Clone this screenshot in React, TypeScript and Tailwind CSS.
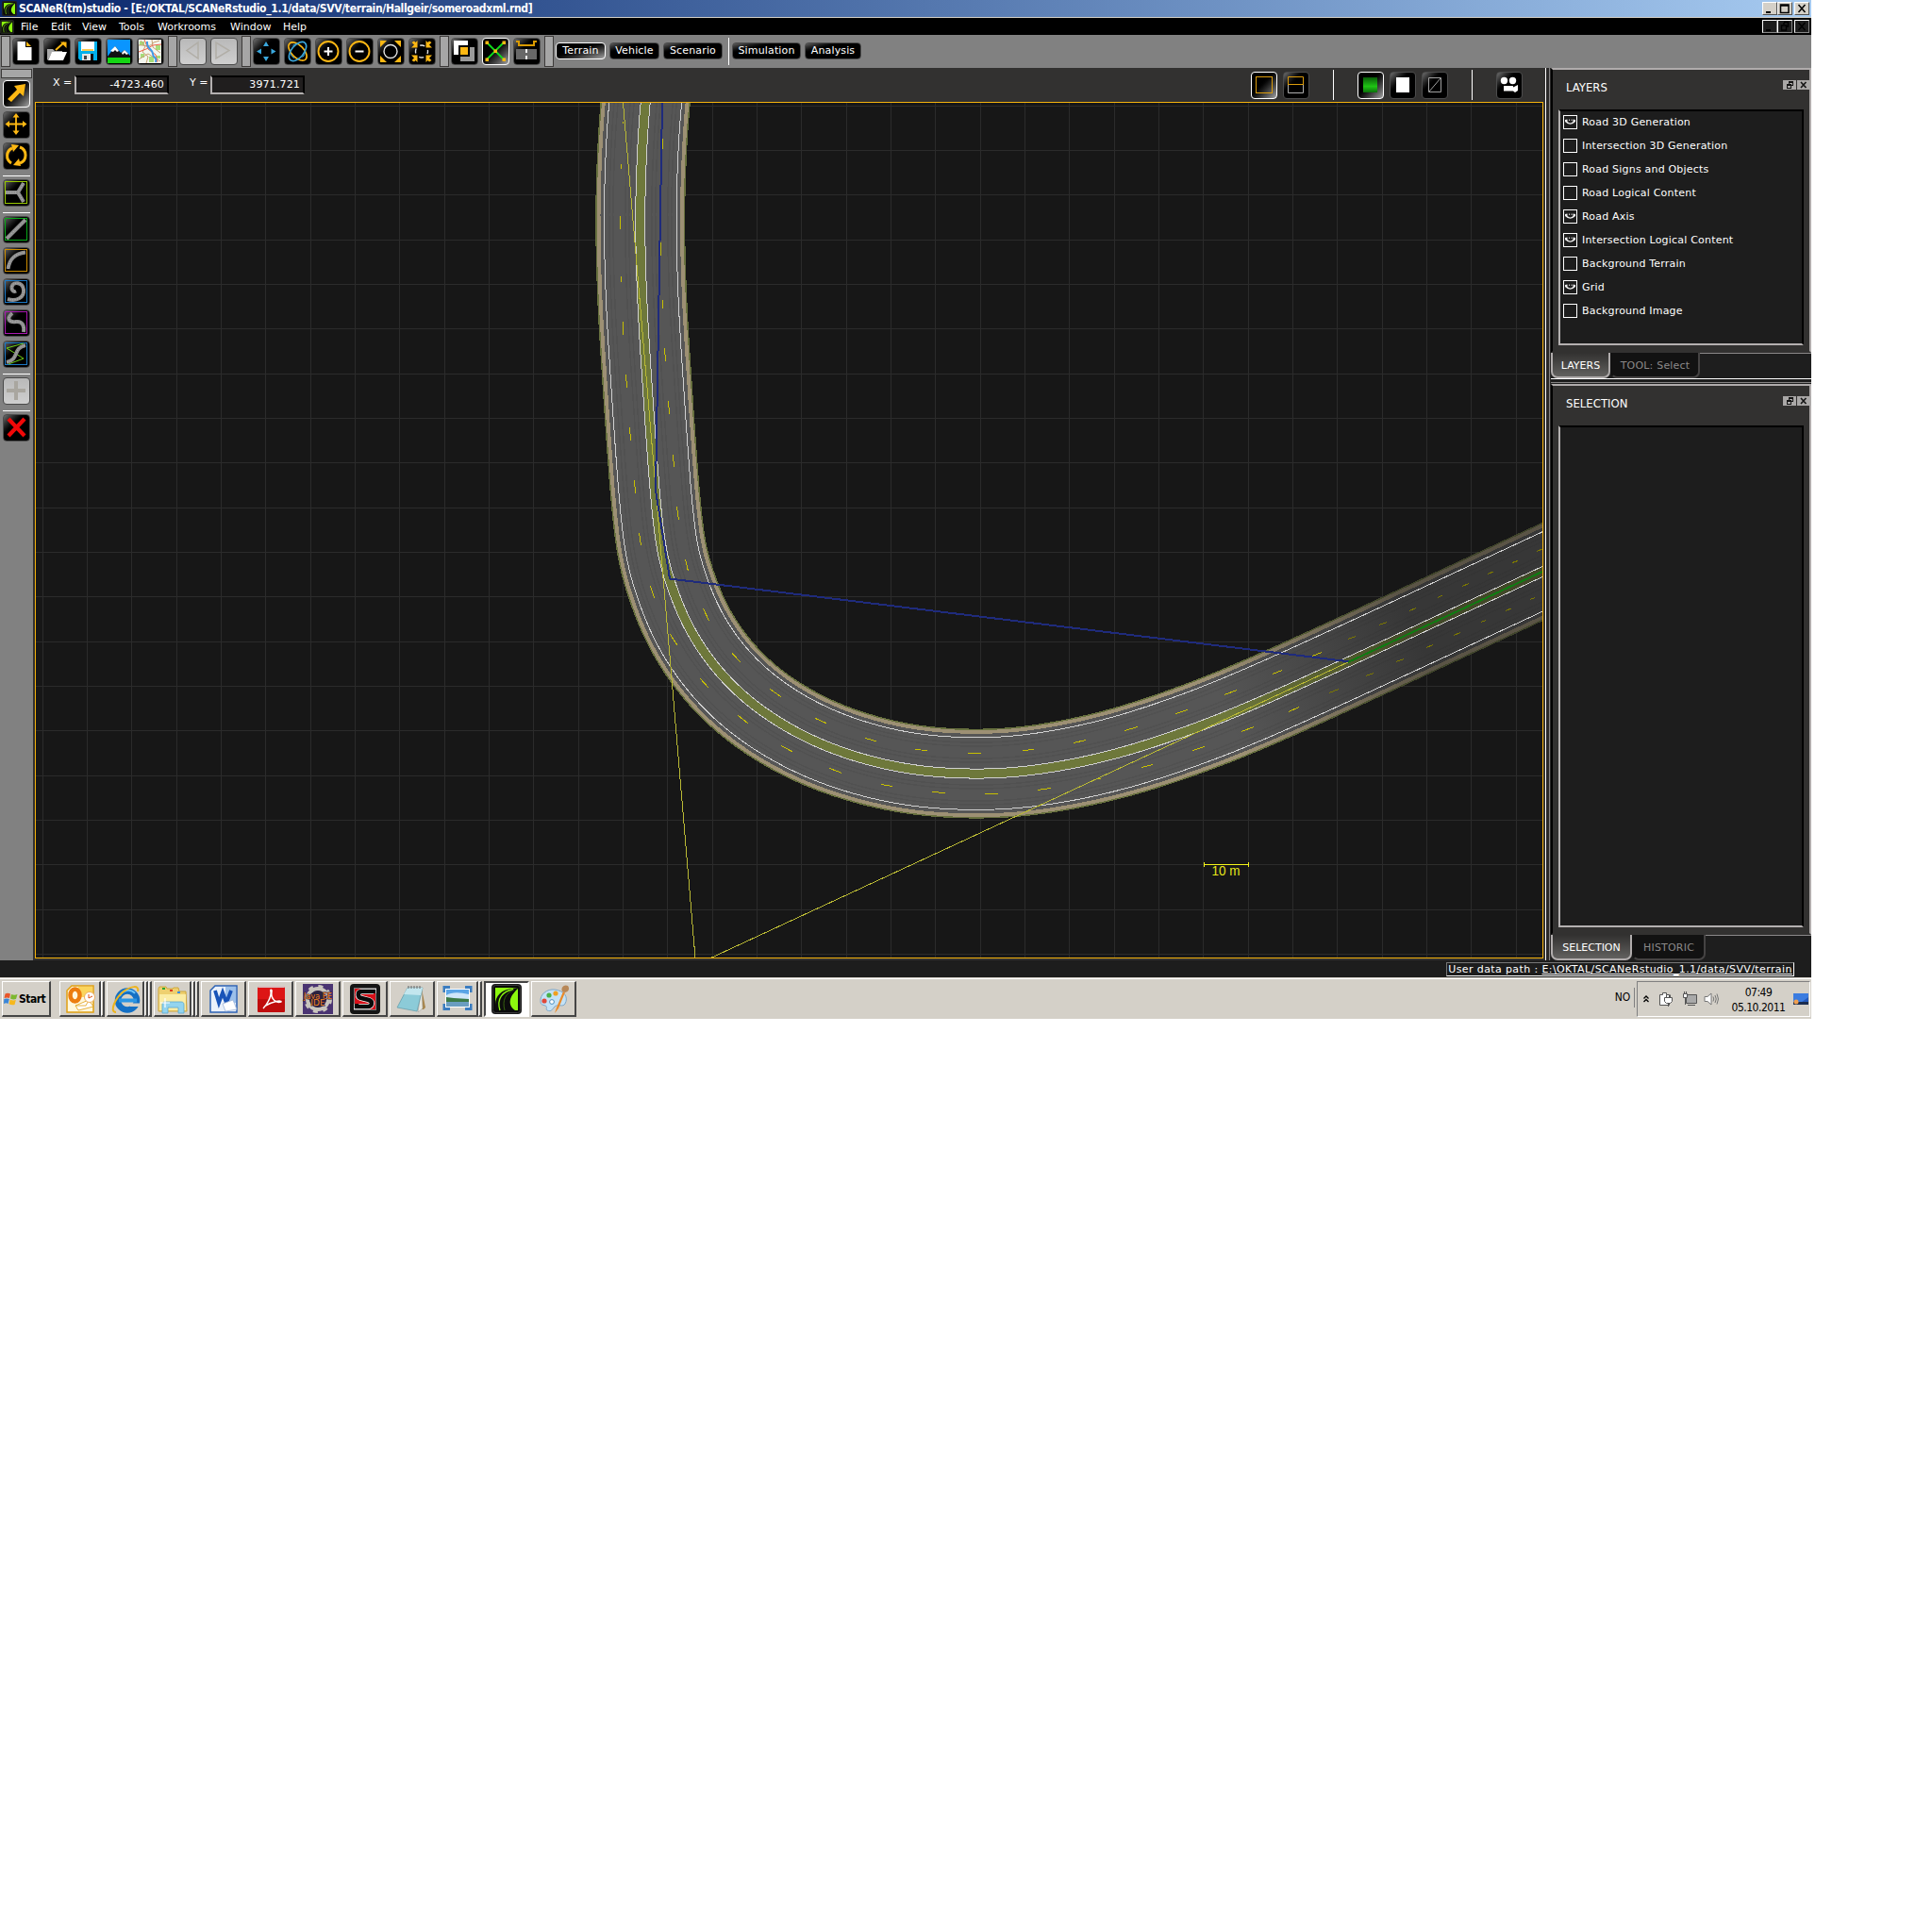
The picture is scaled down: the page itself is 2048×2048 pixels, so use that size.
import React from "react";

type Pt = [number, number];

const UI = "font-['DejaVu_Sans',sans-serif]";
const NARROW = "font-['DejaVu_Sans_Condensed','DejaVu_Sans',sans-serif] [font-stretch:condensed]";

/* ---------- road geometry ---------- */

const ROAD_POINTS: Pt[] = [
  [689, 65], [684, 109], [680.7, 157], [678.8, 214], [679, 264], [681.3, 330], [686, 406], [691.3, 483],
  [695.9, 540], [702, 588], [710, 616], [727, 660], [753.3, 701.7], [785.5, 736.3], [821, 763], [859, 784],
  [894, 798], [934, 809.6], [980, 817.5], [1030, 820.3], [1077, 818.6], [1127, 811.6], [1165, 803.5],
  [1207, 792.2], [1273, 769.5], [1340, 742], [1430, 701.3], [1532, 654], [1635, 606], [1700, 576],
];

function buildCenterline(): Pt[] {
  const dense: Pt[] = [];
  const P = ROAD_POINTS;
  for (let i = 0; i < P.length - 1; i++) {
    const p0 = P[Math.max(0, i - 1)], p1 = P[i], p2 = P[i + 1], p3 = P[Math.min(P.length - 1, i + 2)];
    const steps = Math.max(2, Math.round(Math.hypot(p2[0] - p1[0], p2[1] - p1[1]) / 4));
    for (let s = 0; s < steps; s++) {
      const t = s / steps;
      const f = (a: number, b: number, c: number, d: number) =>
        0.5 * (2 * b + (c - a) * t + (2 * a - 5 * b + 4 * c - d) * t * t + (3 * b - a - 3 * c + d) * t * t * t);
      dense.push([f(p0[0], p1[0], p2[0], p3[0]), f(p0[1], p1[1], p2[1], p3[1])]);
    }
  }
  let cur = dense;
  for (let pass = 0; pass < 3; pass++) {
    cur = cur.map((p, i) => {
      const k = Math.min(4, i, cur.length - 1 - i);
      let sx = 0, sy = 0;
      for (let j = i - k; j <= i + k; j++) { sx += cur[j][0]; sy += cur[j][1]; }
      return [sx / (2 * k + 1), sy / (2 * k + 1)] as Pt;
    });
  }
  return cur;
}

const CENTER = buildCenterline();

function offsetPath(d: number): string {
  return CENTER.map((p, i) => {
    const a = CENTER[Math.max(0, i - 1)], b = CENTER[Math.min(CENTER.length - 1, i + 1)];
    const dx = b[0] - a[0], dy = b[1] - a[1], l = Math.hypot(dx, dy) || 1;
    return `${i ? "L" : "M"}${(p[0] - (dy / l) * d).toFixed(2)} ${(p[1] + (dx / l) * d).toFixed(2)}`;
  }).join("");
}

const DASHES: number[][] = [
  [660.5, 129, 660.5, 131], [658.5, 173.5, 658.5, 178.5], [657.5, 229, 657.5, 243], [658.5, 293, 658.5, 299],
  [660.5, 341, 660.5, 354.5], [663.5, 397, 664.5, 411], [667.5, 453, 668.5, 467], [672.5, 509, 673.5, 523],
  [677.5, 565, 679.5, 578.5], [689.5, 621, 693.5, 634], [710.5, 672.5, 717.7, 683.6],
  [702.5, 147, 702.5, 158], [700.5, 257, 700.5, 271], [702.5, 318, 702.5, 327], [704.5, 369, 705.5, 383],
  [708.5, 425, 709.5, 439], [713.5, 482, 714.5, 495], [717.5, 537, 719.5, 551], [726.5, 593, 729.5, 605.5],
  [745.5, 645, 751.5, 658], [776, 692.3, 784.7, 701.7], [816.3, 730.3, 827.7, 738.7], [864, 761.3, 876, 766.7],
  [917, 782.3, 928.7, 785.7], [970, 794.5, 982.7, 795.5], [1026, 798.5, 1040, 798.5], [1084, 795.5, 1096, 794.5],
  [1138, 787.5, 1151, 784.5], [742.3, 719.3, 750.7, 728.7], [782.3, 758.3, 792.7, 766.7], [828, 790.3, 839.7, 796.7],
  [879, 814.3, 892, 819.3], [934, 831.5, 946, 833.5], [988, 839.5, 1002, 840.5], [1044, 841.5, 1058, 841.5],
  [1100, 837.5, 1114, 835.5], [1192, 774.5, 1206, 770.5], [1246, 756.5, 1259, 752.5], [1298, 736.5, 1311, 731.5],
  [1349, 714.5, 1359, 710.5], [1391, 695.5, 1401, 691.5], [1160, 826.5, 1167, 825], [1210, 813.5, 1222, 810.5],
  [1264, 795.5, 1277, 791.5], [1316, 775.5, 1329, 770.5], [1366, 754.5, 1377, 749.5],
];

const FADED_DASHES: number[][] = [
  [1429, 677.5, 1437, 674.5], [1462, 662.5, 1470, 659.5], [1494, 647.5, 1501, 644.5], [1524, 633.5, 1529, 631],
  [1550, 621.5, 1557, 618.5], [1577, 608.5, 1583, 606], [1603, 596.5, 1609, 594.5], [1629, 584.5, 1635, 582],
  [1409, 734.5, 1419, 730.5], [1448, 716.5, 1456, 713.5], [1480, 701.5, 1488, 698.5], [1512, 686.5, 1519, 683.5],
  [1541, 673.5, 1548, 670.5], [1570, 659.5, 1575, 657.5], [1596, 647.5, 1602, 645], [1622, 635.5, 1627, 633.5],
];

const toPath = (segs: number[][]) => segs.map((d) => `M${d[0]} ${d[1]}L${d[2]} ${d[3]}`).join("");

function Viewport() {
  const grid: string[] = [];
  for (let i = 0; i < 34; i++) grid.push(`M${Math.floor(45.2 + 47.33 * i) + 0.5} 109V1015`);
  for (let i = 0; i < 20; i++) grid.push(`M38 ${Math.floor(112.2 + 47.33 * i) + 0.5}H1635`);
  const c = offsetPath(0);
  return (
    <svg viewBox="38 109 1597 906" width="1597" height="906" className="block" shapeRendering="crispEdges" fill="none">
      <defs>
        <linearGradient id="fade" gradientUnits="userSpaceOnUse" x1="1300" y1="760" x2="1500" y2="668">
          <stop offset="0" stopColor="#181818" stopOpacity="0" />
          <stop offset="1" stopColor="#181818" stopOpacity="0.5" />
        </linearGradient>
      </defs>
      <path d={grid.join("")} stroke="#2b2b2b" />
      <path d={c} stroke="#68713f" strokeWidth="95" />
      <path d={c} stroke="#9d9074" strokeWidth="92" />
      <path d={c} stroke="#565656" strokeWidth="84.5" />
      {[-33, -29, -16, -12, 12, 16, 29, 33].map((d) => (
        <path key={d} d={offsetPath(d)} stroke="#4f4f4f" strokeWidth="1.5" opacity="0.6" />
      ))}
      <path d={c} stroke="#6e783b" strokeWidth="10" />
      <path d={c} stroke="url(#fade)" strokeWidth="95" />
      {[-38.3, -5, 5, 38.3].map((d) => (
        <path key={d} d={offsetPath(d)} stroke="#d0d0d0" />
      ))}
      <path d={toPath(DASHES)} stroke="#c8c000" />
      <path d={toPath(FADED_DASHES)} stroke="#7c7800" />
      <path d="M660.5 109L737 1015M754.5 1015L1430 701.5" stroke="#b9b934" />
      <path d="M702 109L695 520L710 613.5L1430 701.3" stroke="#1f2b7c" strokeWidth="2" />
      <path d="M1429 702L1636 605.5" stroke="#117a12" strokeWidth="2" />
      <path d="M1276.5 914V919M1323.5 914V919M1276 916.5H1324" stroke="#f5f51a" />
      <text x="1284.5" y="927.5" fontSize="15" textLength="30" lengthAdjust="spacingAndGlyphs" fill="#e8e81a" className="font-['Liberation_Sans',sans-serif]">10 m</text>
    </svg>
  );
}

/* ---------- toolbar pieces ---------- */

function Btn({ children, active, disabled, small }: { children?: React.ReactNode; active?: boolean; disabled?: boolean; small?: boolean }) {
  const look = disabled
    ? "border-[#4a4a4a] bg-gradient-to-b from-[#b9b9b9] to-[#cfcfcf]"
    : active
    ? "border-white bg-gradient-to-br from-black from-35% to-[#a5a5a5]"
    : "border-[#4c4c4c] bg-gradient-to-br from-[#707070] to-black to-45%";
  return (
    <div className={`${small ? "w-7" : "w-[29px]"} h-[29px] shrink-0 rounded-[4px] border ${look}`}>
      <svg viewBox="1 1 27 27" width="27" height="27" className="block overflow-visible" fill="none">
        {children}
      </svg>
    </div>
  );
}

const Handle = () => <div className="h-[33px] w-[10px] shrink-0 border border-[#3c3a39] bg-[#a6a6a6]" />;

function Pill({ label, w, active }: { label: string; w: string; active?: boolean }) {
  return (
    <div
      className={`${w} ${UI} flex h-[18px] shrink-0 items-center justify-center rounded-[4px] border text-[11px] tracking-[0.15px] whitespace-nowrap text-white ${
        active
          ? "border-white bg-gradient-to-br from-black from-35% to-[#a5a5a5]"
          : "border-[#4c4c4c] bg-gradient-to-br from-[#606060] to-black to-35%"
      }`}
    >
      {label}
    </div>
  );
}

function Leaf({ size }: { size: number }) {
  return (
    <svg viewBox="0 0 32 32" width={size} height={size} className="shrink-0" fill="none">
      <rect width="32" height="32" rx="4" fill="#1a1a1a" />
      <rect x="1.500" y="1.500" width="29" height="29" rx="3" fill="#0a0a0a" stroke="#3a3a3a" />
      <rect x="4" y="4" width="24" height="24" fill="#8cf80e" />
      <path d="M28 4L20 5C11 7 4 12 4 22V28H25C18 23 17 15 28 5Z" fill="#0c0c0c" />
      <path d="M4 4H20C11 6 6 9 4 14Z" fill="#8cf80e" />
      <path d="M23 5.500C12 8 5 15 9 28" stroke="#8cf80e" strokeWidth="1.300" />
      <path d="M24 6C15 10 11 17 14 28" stroke="#3c6a10" strokeWidth="0.900" />
    </svg>
  );
}

function MainToolbar() {
  const A = "#fdb813";
  const B = "#3aa7dd";
  return (
    <div className="flex h-[35px] items-start bg-[#818181] pt-[1px] pl-[1px]">
      <Handle />
      <div className="mt-[2px] ml-[2px] flex gap-1">
        <Btn>
          <path d="M5.500 4H14V10H20.500V24H5.500Z" fill="#fff" />
          <path d="M15 4L20 9H15Z" fill={A} />
        </Btn>
        <Btn>
          <path d="M4 12H10L12 14H20V16H9L5 23.500H4Z" fill="#aaa" />
          <path d="M9 15H25L21 24H5Z" fill="#fff" />
          <path d="M13 13L22 5" stroke={A} strokeWidth="2" />
          <path d="M18 4.500H24.500V11Z" fill={A} />
        </Btn>
        <Btn>
          <path d="M4 4H24V24H6L4 22Z" fill="#00b0ea" />
          <path d="M7 4H21V14H7Z" fill="#fff" />
          <path d="M8 13H20" stroke={A} strokeWidth="1.500" />
          <path d="M8 17H20V24H8Z" fill="#111" />
          <path d="M8 17H17V24H8Z" fill="#e6e6e6" />
          <path d="M10 19H13V23H10Z" fill="#444" />
        </Btn>
        <Btn>
          <rect x="2" y="2" width="24" height="25" fill="#0a95ff" />
          <path d="M2 20L10 9L16 16L20 13L26 19V27H2Z" fill="#111" />
          <path d="M5 14L10 9L14 14L12 15L10 13L8 15ZM17 16L20 13L24 17L22 18L20 16L18 18Z" fill="#fff" />
          <path d="M2 21H26V27H2Z" fill="#14d614" />
        </Btn>
        <Btn>
          <rect x="2" y="2" width="24" height="25" fill="#f3f6ee" />
          <path d="M3 4H8V8H3ZM20 8H25V13H20ZM4 17H8V21H4ZM13 20H18V26H13ZM21 19H25V22H21Z" fill="#a6dd7a" />
          <path d="M2 8C8 7 12 12 18 5L24 3M4 3L9 9L6 15L12 20L10 27M16 2L17 10L25 16M2 23L12 17L25 25" stroke="#c8a070" strokeWidth="1" />
          <path d="M2 15L10 12L17 8L26 7M22 26L20 18L12 12L8 2" stroke="#f0604a" strokeWidth="1" />
          <path d="M11 4C10 12 17 12 17 17S22 20 20 26" stroke="#3e9be8" strokeWidth="2" />
        </Btn>
      </div>
      <div className="ml-[4px]"><Handle /></div>
      <div className="mt-[2px] ml-[2px] flex gap-1">
        <Btn disabled><path d="M20 5V22L8 13.500Z" stroke="#b1aea7" strokeWidth="1.500" /></Btn>
        <Btn disabled><path d="M6 5V22L20 13.500Z" stroke="#b1aea7" strokeWidth="1.500" /></Btn>
      </div>
      <div className="ml-[4px]"><Handle /></div>
      <div className="mt-[2px] ml-[2px] flex gap-1">
        <Btn>
          <path d="M14 4L17 9H11ZM14 25L17 20H11ZM4 14.500L9 11.500V17.500ZM24.500 14.500L19.500 11.500V17.500Z" fill={B} />
        </Btn>
        <Btn>
          <ellipse cx="14.500" cy="14.500" rx="12" ry="6.500" transform="rotate(45 14.500 14.500)" stroke={A} strokeWidth="1.600" />
          <ellipse cx="14.500" cy="14.500" rx="12" ry="6.500" transform="rotate(-50 14.500 14.500)" stroke={B} strokeWidth="1.600" />
          <circle cx="14.500" cy="14.500" r="8" stroke={B} strokeWidth="1" strokeDasharray="7 9" />
        </Btn>
        <Btn>
          <circle cx="14" cy="14.500" r="10.500" stroke={A} strokeWidth="1.900" />
          <path d="M9.500 14.500H18.500M14 10V19" stroke="#fff" strokeWidth="2" />
        </Btn>
        <Btn>
          <circle cx="14" cy="14.500" r="10.500" stroke={A} strokeWidth="1.900" />
          <path d="M9.500 14.500H18.500" stroke="#fff" strokeWidth="2" />
        </Btn>
        <Btn>
          <circle cx="14" cy="14.500" r="7" stroke="#e4e4e4" strokeWidth="1.400" />
          <path d="M3 3H10L3 10ZM25 3V10L18 3ZM3 26V19L10 26ZM25 26H18L25 19Z" fill={A} />
        </Btn>
        <Btn>
          <circle cx="14" cy="14.500" r="6.500" stroke="#e4e4e4" strokeWidth="1.400" strokeDasharray="5.200 5" strokeDashoffset="2.600" />
          <path d="M9.500 3V10.500H3L6 7.500L3.500 5L6 3.500L7.500 5ZM18.500 3V10.500H25L22 7.500L24.500 5L22 3.500L20.500 5ZM9.500 26V18.500H3L6 21.500L3.500 24L6 25.500L7.500 24ZM18.500 26V18.500H25L22 21.500L24.500 24L22 25.500L20.500 24Z" fill={A} />
        </Btn>
      </div>
      <div className="ml-[4px]"><Handle /></div>
      <div className="mt-[2px] ml-[2px] flex gap-1">
        <Btn>
          <path d="M3 3H18V8H8V18H3Z" fill="#fff" />
          <path d="M20 10H25V25H10V20H20Z" fill="#999" />
          <rect x="10" y="10" width="8" height="8" fill={A} />
        </Btn>
        <Btn active>
          <path d="M5 5L23 23M23 5L5 23" stroke="#0edc1a" strokeWidth="1.800" />
          <path d="M3.500 3.500H7V7H3.500ZM21.500 3.500H25V7H21.500ZM3.500 21.500H7V25H3.500ZM21.500 21.500H25V25H21.500ZM12.500 12.500H16V16H12.500Z" fill={A} />
        </Btn>
        <Btn>
          <path d="M3 4H6V8H22V4H25" stroke="#d99a00" strokeWidth="2" />
          <path d="M3 12H25V23H3Z" fill="#686868" />
          <path d="M14 12V16M14 19V23" stroke="#eee" strokeWidth="2" />
        </Btn>
      </div>
      <div className="ml-[4px]"><Handle /></div>
      <div className="mt-[7px] ml-[2px] flex">
        <Pill label="Terrain" w="w-[53px]" active />
        <Pill label="Vehicle" w="ml-1 w-[53px]" />
        <Pill label="Scenario" w="ml-1 w-[63px]" />
      </div>
      <div className="mt-[2px] ml-[6px] h-[29px] w-px bg-white" />
      <div className="mt-[7px] ml-[3px] flex gap-1">
        <Pill label="Simulation" w="w-[73px]" />
        <Pill label="Analysis" w="w-[60px]" />
      </div>
    </div>
  );
}

const Rule = ({ cls }: { cls: string }) => <div className={`${cls} h-px w-[29px] bg-white`} />;

function RoadIcon({ d, frame, extra }: { d: string; frame: string; extra?: string }) {
  return (
    <>
      <rect x="2.500" y="2.500" width="23" height="23" stroke={frame} />
      {extra && <path d={extra} stroke="#6fd016" strokeWidth="1" />}
      <path d={d} stroke="#8e8e8e" strokeWidth="4" />
      <path d={d} stroke="#bdbdbd" strokeWidth="0.8" strokeDasharray="1 1.500" />
    </>
  );
}

function SideToolbar() {
  const A = "#fdb813";
  return (
    <div className="flex h-[946px] w-[35px] shrink-0 flex-col bg-[#818181] pt-[1px] pl-[3px]">
      <div className="-ml-[2px] h-[10px] w-[33px] border border-[#3c3a39] bg-[#a6a6a6]" />
      <div className="mt-[2px] flex flex-col gap-1">
        <Btn active><path d="M5 20L15 10L12 6L24 4L22 17L18 13.500L9 23Z" fill={A} /></Btn>
        <Btn>
          <path d="M14 5V23M5 13.500H23" stroke={A} strokeWidth="1.800" />
          <path d="M14 2L17.500 6.500H10.500ZM14 25L17.500 20.500H10.500ZM2.500 13.500L7 10V17ZM25.500 13.500L21 10V17Z" fill={A} />
        </Btn>
        <Btn>
          <path d="M9 22A9 9 0 0 1 10 6M18 5A9 9 0 0 1 18 22" stroke={A} strokeWidth="3" />
          <path d="M9 2L17 3L11 10ZM19 25L11 24L17 17Z" fill={A} />
        </Btn>
      </div>
      <Rule cls="mt-[6px]" />
      <div className="mt-[3px]"><Btn><RoadIcon frame="#98c800" d="M3 14H15M22 4L16 14L22 24" /></Btn></div>
      <Rule cls="mt-[6px]" />
      <div className="mt-[3px] flex flex-col gap-1">
        <Btn><RoadIcon frame="#08a818" d="M4 24L24 4" /></Btn>
        <Btn><RoadIcon frame="#cc8c00" d="M5.500 23C7 13 12 7 24 5.500" /></Btn>
        <Btn><RoadIcon frame="#1b78c4" d="M5 22C15 25 23 20 22 12C21 4 11 3 9.500 9C9 12 11 15 14 13.500" /></Btn>
        <Btn><RoadIcon frame="#a818b0" d="M10 4C3 10 7 14 14 13S23 18 22 24" /></Btn>
        <Btn><RoadIcon frame="#1b78c4" d="M4 23C18 20 10 8 24 5" extra="M22 3L4 8L22 19L6 25" /></Btn>
      </div>
      <Rule cls="mt-[6px]" />
      <div className="mt-[3px]"><Btn disabled><path d="M14 4V24M4 14H24" stroke="#a9a69f" strokeWidth="4" /></Btn></div>
      <Rule cls="mt-[6px]" />
      <div className="mt-[3px]"><Btn><path d="M6 5L23 23M23 5L6 23" stroke="#f00808" strokeWidth="4.200" /></Btn></div>
    </div>
  );
}

function CoordBar() {
  const field = "flex h-5 items-center justify-end border-2 border-t-black border-r-black border-b-[#b4b0b0] border-l-[#b4b0b0] bg-[#201e1e] text-[11px]";
  return (
    <div className={`${UI} flex h-9 items-start bg-[#323130] text-[11px] text-white`}>
      <div className="mt-2 ml-[21px] w-[23px] leading-4 whitespace-nowrap">X =</div>
      <div className={`${field} mt-2 w-[100px] pr-[3px] tracking-[0.15px]`}>-4723.460</div>
      <div className="mt-2 ml-[22px] w-[22px] leading-4 whitespace-nowrap">Y =</div>
      <div className={`${field} mt-2 w-[100px] pr-[3px] tracking-[0.15px]`}>3971.721</div>
      <div className="mt-1 ml-[1003px] flex">
        <Btn active small><rect x="5.500" y="5.500" width="17" height="17" stroke="#dc9c0c" /></Btn>
        <div className="ml-[6px]" />
        <Btn small>
          <path d="M5.500 14V5.500H21.500V14" stroke="#dc9c0c" />
          <path d="M5.500 14V22.500H21.500V14" stroke="#b0b0b0" />
          <path d="M5 13.500H22" stroke="#dc9c0c" />
        </Btn>
      </div>
      <div className="mt-[2px] ml-[25px] h-8 w-px bg-white" />
      <div className="mt-1 ml-[25px] flex">
        <Btn active small>
          <defs>
            <linearGradient id="grn" x1="0" y1="0" x2="0" y2="1">
              <stop offset="0" stopColor="#095c09" /><stop offset="0.6" stopColor="#1fc414" /><stop offset="1" stopColor="#0b700b" />
            </linearGradient>
          </defs>
          <rect x="6" y="6" width="15" height="16" fill="url(#grn)" />
        </Btn>
        <div className="ml-[6px]" />
        <Btn small><rect x="7" y="6" width="14" height="16" fill="#fff" /></Btn>
        <div className="ml-[6px]" />
        <Btn small><path d="M7.500 6.500H20.500V21.500H7.500ZM8 21L20 7" stroke="#a0a0a0" /></Btn>
      </div>
      <div className="mt-[2px] ml-[25px] h-8 w-px bg-white" />
      <div className="mt-1 ml-[25px]">
        <Btn small>
          <circle cx="8.500" cy="9.500" r="3.700" fill="#fff" />
          <circle cx="17.500" cy="9.500" r="3.700" fill="#fff" />
          <path d="M8 15H18V16.500L23 14V20L20 22L18 20.500H8Z" fill="#fff" />
        </Btn>
      </div>
    </div>
  );
}

/* ---------- dock panels ---------- */

function DockButtons() {
  return (
    <div className="-mr-px flex gap-px">
      <svg width="14" height="10" viewBox="0 0 14 10" shapeRendering="crispEdges" className="block bg-[#aaa8a7]" fill="none">
        <path d="M6 1.500H10.500V5.500H9M6 2.500H11M6.500 2V4M4 4.500H8.500V8.500H4.500V4.500M4 5.500H8" stroke="#151515" />
      </svg>
      <svg width="14" height="10" viewBox="0 0 14 10" className="block bg-[#aaa8a7]" fill="none">
        <path d="M4 2L9.500 8M9.500 2L4 8" stroke="#151515" strokeWidth="1.600" />
      </svg>
    </div>
  );
}

function Panel({ title, h, box, children }: { title: string; h: string; box: string; children?: React.ReactNode }) {
  return (
    <div className={`${h} flex flex-col border-2 border-t-[#b0acac] border-r-[#b0acac] border-b-[#323130] border-l-black bg-[#323130]`}>
      <div className="flex h-[42px] items-start justify-between pt-[11px]">
        <div className={`${NARROW} ml-[14px] text-[13px] leading-4 text-white`}>{title}</div>
        <DockButtons />
      </div>
      <div className={`${box} ml-[6px] w-[260px] border-2 border-t-black border-r-black border-b-[#b4b0b0] border-l-[#b4b0b0] bg-[#1d1d1d]`}>
        {children}
      </div>
    </div>
  );
}

function Tabs({ tabs }: { tabs: { label: string; w: string; on?: boolean }[] }) {
  return (
    <div className={`${UI} flex h-[27px] border-t border-[#8a8888] bg-[#1e1e1e] text-[11px]`}>
      {tabs.map((t) => (
        <div
          key={t.label}
          className={`${t.w} -mt-px flex h-[27px] items-center justify-center rounded-b-[7px] border-x-2 border-b-2 pt-[3px] whitespace-nowrap ${
            t.on
              ? "border-[#b0acac] bg-gradient-to-b from-[#323130] to-[#62615f] text-white"
              : "border-[#454343] border-l-transparent bg-[#121212] tracking-[0.2px] text-[#8b8989]"
          }`}
        >
          {t.label}
        </div>
      ))}
    </div>
  );
}

const LAYERS: [string, boolean][] = [
  ["Road 3D Generation", true], ["Intersection 3D Generation", false], ["Road Signs and Objects", false],
  ["Road Logical Content", false], ["Road Axis", true], ["Intersection Logical Content", true],
  ["Background Terrain", false], ["Grid", true], ["Background Image", false],
];

function LayerList() {
  return (
    <div className={`${UI} -mt-px pl-[3px] text-[11px] tracking-[0.2px] text-white`}>
      {LAYERS.map(([name, on]) => (
        <div key={name} className="flex h-[25px] items-center gap-[5px]">
          <div className="h-[15px] w-[15px] border border-white">
            {on && (
              <svg viewBox="0 0 13 13" width="13" height="13" className="block" fill="none">
                <path d="M1 4L3.500 3.500L3.500 6Q6.500 8.800 9.500 6L9.500 3.500L12 4V6Q6.500 11.500 1 6Z" fill="#f0f0f0" />
                <path d="M5 3.500H6V5H5ZM7.500 3.500H8.500V5H7.500Z" fill="#ccc" />
              </svg>
            )}
          </div>
          <div className="leading-4 whitespace-nowrap">{name}</div>
        </div>
      ))}
    </div>
  );
}

/* ---------- taskbar ---------- */

function Task({ children, stack = 0, active }: { children: React.ReactNode; stack?: number; active?: boolean }) {
  const raised = "border-t-white border-l-white border-r-[#454545] border-b-[#454545] bg-[#d4d0c8]";
  return (
    <div className="flex h-[38px] w-12 shrink-0">
      <div
        className={`flex flex-1 items-center justify-center ${
          active ? "border-2 border-t-[#454545] border-l-[#454545] border-r-white border-b-white bg-white" : `border border-r-2 border-b-2 ${raised}`
        }`}
      >
        {children}
      </div>
      {Array.from({ length: stack }, (_, i) => (
        <div key={i} className={`w-1 border-t border-r-2 border-b-2 border-l ${raised}`} />
      ))}
    </div>
  );
}

const Ico = ({ children }: { children: React.ReactNode }) => (
  <svg viewBox="0 0 32 32" width="32" height="32" className="block shrink-0 overflow-visible" fill="none">{children}</svg>
);

function Taskbar() {
  return (
    <div className="flex h-11 items-start border-t border-[#d4d0c8] bg-[#d4d0c8] shadow-[inset_0_1px_0_white]">
      <div className="mt-[3px] ml-[2px] flex h-[38px] w-[52px] shrink-0 items-center border border-t-white border-r-2 border-r-[#454545] border-b-2 border-b-[#454545] border-l-white pl-px">
        <svg viewBox="0 0 15 14" width="15" height="14" className="shrink-0">
          <path d="M1.500 1.500Q4 0 7 1.500L6 6Q3.500 5 0.500 6Z" fill="#e8562a" />
          <path d="M8 2Q11 3.500 14.500 2L13 7Q10 8 7 6.500Z" fill="#7db72f" />
          <path d="M0.300 7Q3 6 5.800 7L4.500 12Q2.500 10.500 0 12Z" fill="#3a86d8" />
          <path d="M6.800 7.500Q9.500 9 12.800 8L11.500 13Q8.500 14 5.500 12.300Z" fill="#f7b81c" />
        </svg>
        <span className={`${NARROW} ml-px text-[12px] font-bold tracking-[-0.5px] text-black`}>Start</span>
      </div>
      <div className="mt-[3px] ml-[9px] flex gap-[2px]">
        <Task stack={1}>
          <Ico>
            <path d="M7 2H30V30H2V7Z" fill="#fff7dc" stroke="#e0a010" strokeWidth="1.500" />
            <path d="M14 3H29V14H14Z" fill="#fbd55c" />
            <ellipse cx="10.500" cy="12" rx="5" ry="6.500" stroke="#ec7d10" strokeWidth="4.500" />
            <path d="M11 23L25 17L30 24L14 28Z" fill="#fff" stroke="#e0a010" strokeWidth="0.800" />
            <path d="M11 23L22 23L25 17" stroke="#e0a010" strokeWidth="0.800" />
            <circle cx="26" cy="14" r="5.500" fill="#fff" stroke="#eeb060" />
            <path d="M25 11V15L29 13" stroke="#e05010" />
          </Ico>
        </Task>
        <Task stack={2}>
          <Ico>
            <circle cx="18" cy="17.500" r="10" stroke="#1470c4" strokeWidth="6.500" />
            <path d="M9 17.500H28" stroke="#2b96e4" strokeWidth="4" />
            <path d="M21 20.500H32V24H21Z" fill="#d4d0c8" />
            <path d="M10 13C12 6 22 5 26 10" stroke="#6cc3f8" strokeWidth="2" />
            <path d="M6 30C-2 30 6 14 14 8S31 1 29 8" stroke="#eeb41c" strokeWidth="2" />
          </Ico>
        </Task>
        <Task stack={2}>
          <Ico>
            <path d="M1 5L2 3H9L10 5H16L17 4H22L23 8H30L31 29H1Z" fill="#eed070" stroke="#cfa83c" />
            <path d="M2 11H30V28H2Z" fill="#fbeca4" />
            <path d="M5 4H8V6H5Z" fill="#2aa530" />
            <path d="M13 6H16V8H13Z" fill="#e04020" />
            <path d="M21 8H24V10H21Z" fill="#3a8ee0" />
            <path d="M5 31V22C5 20 6 19 8 19H25C27 19 28 20 28 22V31H22V25H11V31Z" fill="#93d4ef" stroke="#5aa8d0" strokeWidth="0.800" />
            <path d="M8 15V25M3 20H13" stroke="#fff" strokeWidth="1.200" />
          </Ico>
        </Task>
        <Task>
          <Ico>
            <path d="M7 2H30V30H2V7Z" fill="#eaf1fb" stroke="#2c62b4" strokeWidth="1.500" />
            <path d="M18 3H29V20H18Z" fill="#9cc0ea" />
            <path d="M7 7L11 20L15 9L19 20L24 7" stroke="#1853b8" strokeWidth="3.800" />
            <path d="M15 21L26 17L30 27L18 29Z" fill="#fff" stroke="#9db4d8" strokeWidth="0.800" />
          </Ico>
        </Task>
        <Task>
          <Ico>
            <rect x="2" y="3" width="29" height="27" rx="1" fill="#c00d0d" />
            <path d="M2 3H31V16H2Z" fill="#dd1515" />
            <path d="M3 2H30L31 4H2Z" fill="#d8c0c0" />
            <path d="M8 26C11 23 17 14 16 8C15 5 18 6 17 9C16 15 21 21 27 19C28 17 18 18 9 24" stroke="#fff" strokeWidth="1.400" />
          </Ico>
        </Task>
        <Task>
          <Ico>
            <rect width="32" height="32" fill="#4a3472" />
            <circle cx="16" cy="16" r="11" stroke="#c9c5bd" strokeWidth="4" />
            <circle cx="16" cy="16" r="13.500" stroke="#c9c5bd" strokeWidth="3" strokeDasharray="5 5.600" />
            <circle cx="16" cy="16" r="9" fill="#2c2440" />
            <text x="1" y="15.500" fontSize="8" textLength="30" fill="#f48420" stroke="#2a1a3a" strokeWidth="1" paintOrder="stroke" className="font-['DejaVu_Sans',sans-serif]">Java EE</text>
            <text x="16" y="23" fontSize="9" textAnchor="middle" fill="#f48420" stroke="#2a1a3a" strokeWidth="1" paintOrder="stroke" className="font-['DejaVu_Sans',sans-serif]">IDE</text>
          </Ico>
        </Task>
        <Task>
          <Ico>
            <rect width="32" height="32" rx="4" fill="#151515" />
            <rect x="4.500" y="4.500" width="23" height="23" fill="#d80f18" stroke="#777" />
            <path d="M25 10V8H13C7 8 8 14 12 15L20 17C25 19 23 24 19 24H7V21" stroke="#fff" strokeWidth="6" />
            <path d="M25 10V8H13C7 8 8 14 12 15L20 17C25 19 23 24 19 24H7V21" stroke="#0a0a0a" strokeWidth="4.600" />
          </Ico>
        </Task>
        <Task>
          <Ico>
            <path d="M26 5L30 25L28 27L24 27Z" fill="#a8854a" />
            <path d="M26 4L27 26L22 30Z" fill="#e8e8e0" stroke="#999" strokeWidth="0.500" />
            <path d="M11 4H27L21 29L0 25Z" fill="#8ccbd8" stroke="#5e9aa8" strokeWidth="0.700" />
            <path d="M11 4H27L25 12L7 11Z" fill="#c3e6ee" />
            <path d="M12 2V5M15 2V5M18 2V5M21 2V5M24 2V5" stroke="#666" />
          </Ico>
        </Task>
        <Task stack={1}>
          <Ico>
            <path d="M2.500 9V4H8M24 4H29.500V9M29.500 21V26H24M8 26H2.500V21" stroke="#3a7cc0" strokeWidth="4" />
            <rect x="3" y="5" width="26" height="20" fill="#fff" />
            <rect x="4" y="6" width="24" height="18" fill="#5aa4e6" />
            <path d="M4 12Q12 7 28 11V16H4Z" fill="#cfe6fa" />
            <path d="M4 14L12 15L28 16V19H4Z" fill="#3b7a48" />
            <path d="M4 19H28V24H4Z" fill="#6a9dc0" />
          </Ico>
        </Task>
        <Task active><Leaf size={32} /></Task>
        <Task>
          <Ico>
            <path d="M2 19C1 11 9 5 17 6C27 7 32 14 28 21C26 25 20 21 17 24C14 27 14 30 9 28C7 27 10 24 7 23C4 22 2 22 2 19Z" fill="#c4e2f6" stroke="#7fa8c8" />
            <circle cx="11" cy="12" r="2.600" fill="#48b048" /><circle cx="18" cy="10" r="2.600" fill="#f0a020" />
            <circle cx="6" cy="18" r="2.600" fill="#e04838" /><circle cx="14" cy="19" r="2.400" fill="#fff" stroke="#4c90c0" />
            <path d="M17 31L19 25L26 8L28 9L21 26Z" fill="#ea8a28" />
            <path d="M25 8C23 4 27 0 31 2C33 5 32 8 28 9Z" fill="#b88858" />
          </Ico>
        </Task>
      </div>
      <div className="ml-auto flex">
        <div className={`${NARROW} mt-[12px] mr-[4px] text-[12px] leading-4 tracking-[-0.2px] text-black`}>NO</div>
        <div className="mt-[10px] mr-[2px] h-[21px] w-px bg-[#808080]" />
        <div className="mt-[3px] mr-px flex h-[38px] w-[184px] items-center border border-t-[#808080] border-r-white border-b-white border-l-[#808080] pl-[6px]">
          <svg viewBox="0 0 6 8" width="6" height="8" className="shrink-0" fill="none"><path d="M0.500 3.500L3 1L5.500 3.500M0.500 7L3 4.500L5.500 7" stroke="#000" strokeWidth="1.300" /></svg>
          <svg viewBox="0 0 16 16" width="16" height="16" className="ml-[10px] shrink-0" fill="none">
            <path d="M1.500 3.500H4.500V1.500H8.500V3.500H11.500V14.500H1.500Z" fill="#fff" stroke="#555" />
            <path d="M6.500 6.500H14.500V10.500L12.500 12.500H8.500L6.500 10.500ZM8.500 3.500V6M12.500 3.500V6M10.500 12.500V16" fill="#fff" stroke="#555" />
          </svg>
          <svg viewBox="0 0 16 16" width="16" height="16" className="ml-[9px] shrink-0" fill="none">
            <path d="M4.500 3.500H15.500V12.500H4.500Z" fill="#a9a9a9" stroke="#555" />
            <path d="M6 14.500H14" stroke="#555" />
            <path d="M1.500 2.500H5.500V6.500H1.500ZM3.500 7V14M2.500 0V2M4.500 0V2" fill="#fff" stroke="#555" />
          </svg>
          <svg viewBox="0 0 16 16" width="16" height="16" className="ml-[7px] shrink-0" fill="none">
            <path d="M1 5.500H4L8 2V14L4 10.500H1Z" fill="#fff" stroke="#777" />
            <path d="M10 5.500Q11.500 8 10 10.500M12 4Q14.500 8 12 12M14 2.500Q17 8 14 13.500" stroke="#777" />
          </svg>
          <div className={`${NARROW} mt-px ml-[10px] w-[64px] shrink-0 text-center text-[12px] leading-4 tracking-[-0.5px] text-black`}>
            <div>07:49</div>
            <div>05.10.2011</div>
          </div>
          <svg viewBox="0 0 16 12" width="16" height="12" className="ml-[5px] shrink-0">
            <rect width="16" height="12" fill="#3b7ce0" />
            <path d="M5 12L16 4V12Z" fill="#2559ba" />
            <rect y="9" width="16" height="3" fill="#1a2c50" />
            <circle cx="3" cy="9" r="2.500" fill="#f0a050" />
          </svg>
        </div>
      </div>
    </div>
  );
}

/* ---------- window chrome ---------- */

function WinBtn({ dark, d, fill }: { dark?: boolean; d: string; fill?: boolean }) {
  return (
    <svg
      viewBox="0 0 14 12"
      className={`box-border h-[14px] w-4 border border-t-white border-l-white ${dark ? "border-r-[#888] border-b-[#888] bg-[#1c1c1c]" : "border-r-[#505050] border-b-[#505050] bg-[#d4d0c8]"}`}
      fill={fill ? "#000" : "none"}
    >
      <path d={d} stroke={fill ? "none" : "#000"} strokeWidth="1.500" />
    </svg>
  );
}

export default function App() {
  return (
    <div className="h-[2048px] w-[2048px] overflow-hidden bg-white">
      <div className="flex h-[1080px] w-[1920px] flex-col">
        <div className="flex h-[19px] items-center border-b border-[#d4d0c8] bg-gradient-to-r from-[#0a246a] to-[#a6caf0]">
          <div className="ml-[2px]"><Leaf size={16} /></div>
          <div className={`${NARROW} ml-[2px] text-[12px] leading-4 font-bold tracking-[-0.33px] whitespace-nowrap text-white`}>
            SCANeR(tm)studio - [E:/OKTAL/SCANeRstudio_1.1/data/SVV/terrain/Hallgeir/someroadxml.rnd]
          </div>
          <div className="mr-[2px] ml-auto flex">
            <WinBtn fill d="M3 9H8V11H3Z" />
            <WinBtn d="M2.500 2H11V10.500H2.500ZM2.500 3H11" />
            <div className="ml-[2px]"><WinBtn d="M3.500 2L10.500 10M10.500 2L3.500 10" /></div>
          </div>
        </div>
        <div className={`${UI} flex h-[18px] items-center bg-black text-[11px] text-white`}>
          <Leaf size={15} />
          {[["File", "w-8 ml-[7px]"], ["Edit", "w-[33px]"], ["View", "w-[39px]"], ["Tools", "w-[41px]"], ["Workrooms", "w-[77px]"], ["Window", "w-[56px]"], ["Help", "w-10"]].map(([m, w]) => (
            <div key={m} className={`${w} pt-px leading-4`}>{m}</div>
          ))}
          <div className="mr-[2px] ml-auto flex">
            <WinBtn dark fill d="M3 9H8V11H3Z" />
            <WinBtn dark d="M6 1.500H10.500V6H9M6 2V4M3.500 5H8.500V10H3.500Z" />
            <div className="ml-[2px]"><WinBtn dark d="M3.500 2L10.500 10M10.500 2L3.500 10" /></div>
          </div>
        </div>
        <MainToolbar />
        <div className="flex h-[946px]">
          <SideToolbar />
          <div className="flex w-[1603px] flex-col bg-[#323130]">
            <CoordBar />
            <div className="ml-[2px] h-[908px] w-[1599px] border border-[#f4b20c] bg-[#171717]">
              <Viewport />
            </div>
          </div>
          <div className="flex w-[6px] bg-[#2a2929]">
            <div className="w-px bg-white" />
            <div className="ml-[3px] w-px bg-[#858383]" />
          </div>
          <div className="flex w-[276px] flex-col bg-[#1e1e1e]">
            <Panel title="LAYERS" h="h-[302px]" box="h-[250px]"><LayerList /></Panel>
            <Tabs tabs={[{ label: "LAYERS", w: "w-[63px]", on: true }, { label: "TOOL: Select", w: "w-[95px]" }]} />
            <div className="h-px bg-white" />
            <div className="mt-[3px] mb-px h-px bg-[#858383]" />
            <Panel title="SELECTION" h="h-[584px]" box="h-[532px]" />
            <Tabs tabs={[{ label: "SELECTION", w: "w-[86px]", on: true }, { label: "HISTORIC", w: "w-[78px]" }]} />
          </div>
        </div>
        <div className="flex h-[18px] items-start justify-end bg-[#1d1d1d] pt-[2px] pr-[18px]">
          <div className={`${UI} flex h-[15px] w-[369px] items-center justify-center gap-[4px] border border-t-[#777] border-r-white border-b-white border-l-[#777] pt-px text-[11px] leading-3 tracking-[0.39px] whitespace-nowrap text-white`}>
            <span>User data path :</span>
            <span className="underline">E:\OKTAL/SCANeRstudio_1.1/data/SVV/terrain</span>
          </div>
        </div>
        <Taskbar />
      </div>
    </div>
  );
}
